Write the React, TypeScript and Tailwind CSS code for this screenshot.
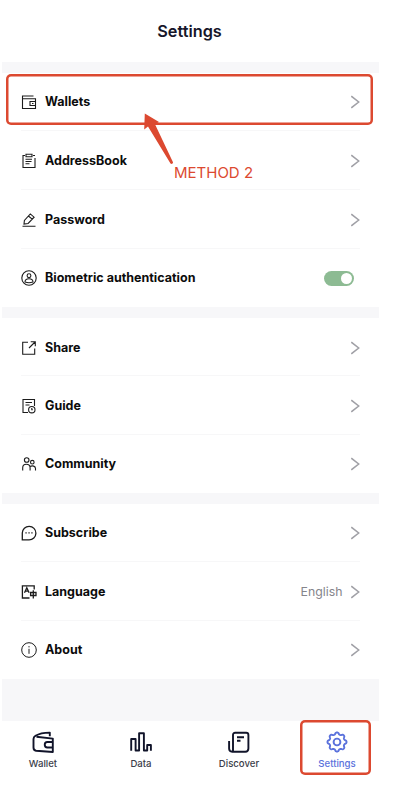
import type { ReactNode } from "react";

type RowProps = { icon: ReactNode; label: string; trailing?: ReactNode; last?: boolean };

function LineIcon({ children, width = 1.1 }: { children: ReactNode; width?: number }) {
  return (
    <svg
      viewBox="0 0 16 16"
      className="size-4 shrink-0 text-[#1c1c1c]"
      fill="none"
      stroke="currentColor"
      strokeWidth={width}
    >
      {children}
    </svg>
  );
}

function Chevron() {
  return (
    <svg viewBox="0 0 9 14" className="h-3.5 w-[9px]" fill="none" stroke="#a0a0a6" strokeWidth="1.5">
      <path d="M.3 1.2 7.7 7 .3 12.8" />
    </svg>
  );
}

function Toggle() {
  return (
    <div className="mr-[6px] flex h-[15px] w-[30px] items-center justify-end rounded-full bg-[#8dbb93] pr-[2px]">
      <div className="size-[11px] rounded-full bg-white" />
    </div>
  );
}

function Row({ icon, label, trailing, last }: RowProps) {
  return (
    <div
      className={`ml-[19px] mr-[19px] flex h-full items-center border-b pt-[2px] ${last ? "border-transparent" : "border-[#f7f7f8]"}`}
    >
      {icon}
      <span className="ml-2 flex-1 text-[12.5px] font-bold leading-4 text-[#0c0c0c]">{label}</span>
      {trailing ?? <Chevron />}
    </div>
  );
}

const Band = () => <div className="h-[10.5px] bg-[#f7f7f9]" />;

function Tab({ icon, label, active }: { icon: ReactNode; label: string; active?: boolean }) {
  return (
    <div className={`flex w-[60px] flex-col items-center ${active ? "text-[#5b72dc]" : "text-[#11142a]"}`}>
      <svg viewBox="0 0 24 24" className="size-6" fill="none" stroke="currentColor" strokeWidth="1.9" strokeLinejoin="round">
        {icon}
      </svg>
      <span className={`mt-[3.5px] text-[9.6px] font-medium leading-3 ${active ? "" : "text-[#3b3d49]"}`}>{label}</span>
    </div>
  );
}

// Eight-lobed cog outline sampled in polar coordinates.
const cogPoints = Array.from({ length: 96 }, (_, i) => {
  const angle = (i / 96) * Math.PI * 2;
  const radius = 8.6 + 0.95 * Math.tanh(1.8 * Math.cos(8 * angle));
  return `${(12 + radius * Math.cos(angle)).toFixed(2)},${(12 + radius * Math.sin(angle)).toFixed(2)}`;
}).join(" ");

export default function App() {
  return (
    <div className="relative h-[798px] w-[400px] overflow-hidden bg-white font-['Inter','Liberation_Sans',sans-serif]">
      <main className="ml-[2px] w-[377px]">
        <h1 className="flex h-[62px] items-center justify-center pr-[2px] text-[16.3px] font-semibold text-[#16162a]">
          Settings
        </h1>
        <Band />
        <section className="grid h-[234.8px] grid-rows-4">
          <Row
            label="Wallets"
            icon={
              <LineIcon>
                <path d="M12.5 2H1.5v12.5h13V4.7H1.5M14.5 7.5H9v4h5.5M11 9.5h1.5" />
              </LineIcon>
            }
          />
          <Row
            label="AddressBook"
            icon={
              <LineIcon>
                <path d="M4 2.5H2v12h12V5M12 2.5h2M5 1.2h6v2.6H5zM4.5 6.2h6.5M4.5 8.5h6M4.5 10.8h4" />
              </LineIcon>
            }
          />
          <Row
            label="Password"
            icon={
              <LineIcon>
                <path d="M1.5 14.3h13M3 12l.4-3.6L9.3 1.9l3.8 3.3-6 6.3zM7.4 4l3.8 3.2" />
              </LineIcon>
            }
          />
          <Row
            label="Biometric authentication"
            last
            trailing={<Toggle />}
            icon={
              <LineIcon>
                <circle cx="8" cy="8" r="7.2" />
                <circle cx="8" cy="5.7" r="1.9" />
                <path d="M4 12c0-2.3 1.7-3.3 4-3.3s4 1 4 3.3c-2 .7-6 .7-8 0z" />
              </LineIcon>
            }
          />
        </section>
        <Band />
        <section className="grid h-[175.4px] grid-rows-3">
          <Row
            label="Share"
            icon={
              <LineIcon>
                <path d="M7 2.2H1.7v12.1h12V8.5M8 8l6-6M9.7 1.7h4.6v4.6" />
              </LineIcon>
            }
          />
          <Row
            label="Guide"
            icon={
              <LineIcon>
                <path d="M7 14.5H2v-13h11.5V8M4.5 4.5h6.5M4.5 7h4" />
                <circle cx="10.8" cy="11.7" r="3.2" />
                <path d="M10.8 10v1.8h1" />
              </LineIcon>
            }
          />
          <Row
            label="Community"
            last
            icon={
              <LineIcon>
                <circle cx="5.7" cy="4" r="2.3" />
                <circle cx="11.3" cy="6.2" r="1.8" />
                <path d="M1.7 14.4v-2.6c0-2.1 1.4-3.5 3.6-3.5 2.4 0 3.8 1.3 3.8 3.5v2.6M9 10.5c2.5-1.3 5.5-.4 5.5 2v1.9" />
              </LineIcon>
            }
          />
        </section>
        <Band />
        <section className="grid h-[175.4px] grid-rows-3">
          <Row
            label="Subscribe"
            icon={
              <LineIcon width={1.3}>
                <path d="M1.3 14.9V8A6.8 6.8 0 1 1 8 14.9z" />
                <path d="M4.4 7.9h1.3M7.4 7.9h1.3M10.3 7.9h1.3" strokeWidth="1.3" />
              </LineIcon>
            }
          />
          <Row
            label="Language"
            icon={
              <LineIcon width={1.3}>
                <path d="M8.5 14H1.4V1.8h11.8v3.7M3.5 8.8l2.3-5 2.3 5M4.3 7.2h3M9.6 8.5h5.4v3H9.6zM12.3 6.3v8.2" />
              </LineIcon>
            }
            trailing={
              <div className="flex items-center gap-[8.5px]">
                <span className="text-[12.3px] leading-4 text-[#85858b]">English</span>
                <Chevron />
              </div>
            }
          />
          <Row
            label="About"
            last
            icon={
              <LineIcon width={1}>
                <circle cx="8" cy="8" r="7.3" />
                <path d="M8 6.8v5M8 4.1v1.3" />
              </LineIcon>
            }
          />
        </section>
        <div className="h-[42px] bg-[#f7f7f9]" />
        <nav className="flex justify-between pl-[11px] pr-[12px] pt-[9px]">
          <Tab
            label="Wallet"
            icon={<path d="M18.8 6.2V2.6c-5 0-10.7.9-14.3 3.2-1.5 1-2 1.6-2 3.1v8.6c0 2.2.8 3 2.6 3.3L21.8 22V8.6L5.5 6.7M21.8 12h-5.5c-3.4 0-3.4 5.5 0 5.5h5.5" />}
          />
          <Tab
            label="Data"
            icon={<path d="M2.2 20.7V9h4.4v11.5h3.5V3.3h4.8v17.2h3.3v-5.5h3.7v5.7" />}
          />
          <Tab
            label="Discover"
            icon={
              <>
                <path d="M6 18.5V5c0-1.5.7-2.2 2.2-2.2h11c1.5 0 2.2.7 2.2 2.2v13.5c0 2.2-1 3.2-3.1 3.2H5.2c-2.1 0-3.1-1-3.1-3.2V11M6 18.5v2.8" />
                <path d="M10 7.3h7M10 10.8h3.5" />
              </>
            }
          />
          <Tab
            active
            label="Settings"
            icon={
              <>
                <polygon points={cogPoints} />
                <circle cx="12" cy="12" r="3.4" />
              </>
            }
          />
        </nav>
      </main>

      <div className="absolute left-[6px] top-[74px] h-[51px] w-[367px] rounded-[5px] shadow-[inset_0_0_0_2.5px_#dc4930]" />
      <div className="absolute left-[300px] top-[720px] h-[55px] w-[71px] rounded-[5px] shadow-[inset_0_0_0_2.5px_#dc4930]" />
      <svg viewBox="0 0 30 52" className="absolute left-[144px] top-[113px] h-[52px] w-[30px]" fill="#dc4930">
        <path d="M.8.5 15 9l-4 2.2L29 49.3c.2 1.2-1.6 2.2-2.5 1.3L4 13.6.2 16.5z" />
      </svg>
      <span className="absolute left-[174px] top-[163px] text-[15px] leading-5 text-[#dc4930]">METHOD 2</span>
    </div>
  );
}
